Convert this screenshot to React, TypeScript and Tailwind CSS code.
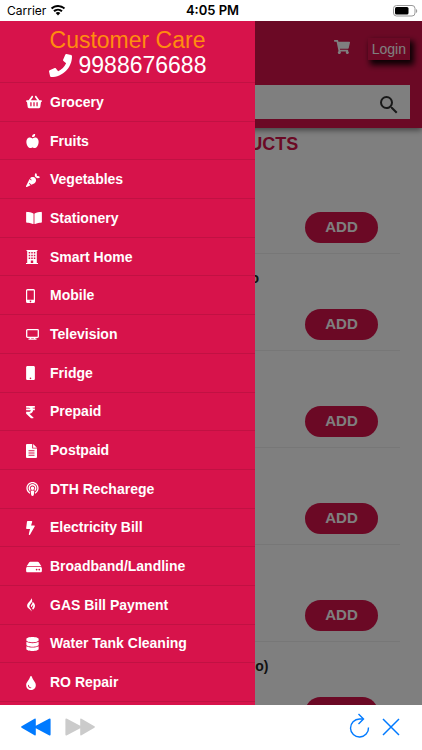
import type { ComponentType, ReactNode } from "react";
import {
  FaAppleAlt,
  FaBolt,
  FaBookOpen,
  FaCarrot,
  FaDatabase,
  FaGripfire,
  FaHdd,
  FaMobile,
  FaPhone,
  FaPodcast,
  FaRupeeSign,
  FaShoppingBasket,
  FaShoppingCart,
  FaTint,
} from "react-icons/fa";
import { MdSearch } from "react-icons/md";

interface IconProps {
  className?: string;
}

interface Category {
  label: string;
  icon: ComponentType<IconProps>;
  size: string;
}

function BuildingIcon({ className }: IconProps) {
  return (
    <svg viewBox="0 0 12 14" className={className} fill="currentColor" fillRule="evenodd">
      <path d="M.5 0h11v1h-.7v12h1.200v1H0v-1h1.200V1H.5ZM2.700 2v1.500h1.500V2ZM5.250 2v1.500h1.500V2ZM7.800 2v1.500h1.500V2ZM2.700 4.700v1.500h1.500V4.700ZM5.250 4.700v1.500h1.500V4.700ZM7.800 4.700v1.500h1.500V4.700ZM2.700 7.400v1.500h1.500V7.400ZM5.250 7.400v1.500h1.500V7.400ZM7.800 7.400v1.500h1.500V7.400ZM4.800 10.500v2.500h2.400v-2.500Z" />
    </svg>
  );
}

function PhoneIcon({ className }: IconProps) {
  return (
    <svg viewBox="0 0 9 14" className={className} fill="currentColor" fillRule="evenodd">
      <path d="M1.500 0h6Q9 0 9 1.500v11Q9 14 7.500 14h-6Q0 14 0 12.500v-11Q0 0 1.500 0ZM1.200 1.400v9.400h6.600V1.400ZM4.500 11.600a.8.8 0 1 0 .01 0Z" />
    </svg>
  );
}

function TvIcon({ className }: IconProps) {
  return (
    <svg viewBox="0 0 13 11" className={className} fill="none" stroke="currentColor" strokeWidth="1.3">
      <rect x=".7" y=".7" width="11.600" height="7.600" rx=".8" />
      <path d="M4.500 8.500v1.500M8.500 8.500v1.500M2.500 10.200h8" />
    </svg>
  );
}

function BillIcon({ className }: IconProps) {
  return (
    <svg viewBox="0 0 11 14" className={className} fill="currentColor" fillRule="evenodd">
      <path d="M1 0h5.200v4.500H11V13q0 1-1 1H1q-1 0-1-1V1q0-1 1-1ZM7.100 0 11 3.700H7.100ZM2.500 6.300v1h6v-1ZM2.500 8.500v1h6v-1ZM2.500 10.700v1h6v-1Z" />
    </svg>
  );
}

const CATEGORIES: Category[] = [
  { label: "Grocery", icon: FaShoppingBasket, size: "h-[14px] w-4" },
  { label: "Fruits", icon: FaAppleAlt, size: "h-[14px] w-[13px]" },
  { label: "Vegetables", icon: FaCarrot, size: "h-[14px] w-[14px]" },
  { label: "Stationery", icon: FaBookOpen, size: "h-[14px] w-4" },
  { label: "Smart Home", icon: BuildingIcon, size: "h-[14px] w-3" },
  { label: "Mobile", icon: PhoneIcon, size: "h-[14px] w-[9px]" },
  { label: "Television", icon: TvIcon, size: "h-[11px] w-[13px]" },
  { label: "Fridge", icon: FaMobile, size: "h-[14px] w-[9px]" },
  { label: "Prepaid", icon: FaRupeeSign, size: "h-[14px] w-[9px]" },
  { label: "Postpaid", icon: BillIcon, size: "h-[14px] w-[11px]" },
  { label: "DTH Recharege", icon: FaPodcast, size: "h-[14px] w-[13px]" },
  { label: "Electricity Bill", icon: FaBolt, size: "h-[14px] w-[9px]" },
  { label: "Broadband/Landline", icon: FaHdd, size: "h-[14px] w-4" },
  { label: "GAS Bill Payment", icon: FaGripfire, size: "h-[14px] w-[11px]" },
  { label: "Water Tank Cleaning", icon: FaDatabase, size: "h-[14px] w-[13px]" },
  { label: "RO Repair", icon: FaTint, size: "h-[14px] w-[10px]" },
];

const PRODUCTS = ["Onion", "Potato Onion Combo", "Tomato", "Carrot", "Spinach", "Baby Carrot (Bamboo)"];

function StatusBar() {
  return (
    <div className="flex h-[21px] shrink-0 items-center justify-between bg-white pr-1 pl-[7px] font-[Inter,sans-serif] text-black">
      <div className="flex flex-1 items-center gap-1 text-xs">
        Carrier
        <svg viewBox="0 0 16 12" className="h-[11px] w-4" fill="currentColor">
          <path d="M8 0C5 0 2.2 1.2.2 3.1l1.5 1.6A9.2 9.2 0 0 1 8 2.2c2.400 0 4.600 1 6.300 2.500l1.500-1.600A11.300 11.300 0 0 0 8 0Z" />
          <path d="M8 4C6 4 4.200 4.800 2.900 6l1.500 1.600a5.300 5.300 0 0 1 7.200 0L13.100 6A7.400 7.400 0 0 0 8 4Z" />
          <path d="M8 7.700c-1 0-1.900.4-2.500 1L8 11.500l2.500-2.800c-.6-.6-1.500-1-2.500-1Z" />
        </svg>
      </div>
      <div className="text-[13px] font-semibold">4:05 PM</div>
      <div className="flex flex-1 justify-end">
        <svg viewBox="0 0 26 12" className="h-3 w-[26px]">
          <rect x="1.500" y=".5" width="21.500" height="10.500" rx="3" fill="none" stroke="#999" />
          <rect x="3" y="2" width="13.500" height="7.500" rx="1.500" />
          <path d="M24.200 4v4c1.300-.6 1.300-3.400 0-4Z" fill="#888" />
        </svg>
      </div>
    </div>
  );
}

function StoreHeader() {
  return (
    <header className="h-[107px] shrink-0 bg-[#d7134b] px-3 shadow-[0_2px_6px_rgba(0,0,0,0.5)]">
      <div className="flex h-16 items-center justify-end gap-[18px] pb-2">
        <button type="button" aria-label="Cart" className="mb-1 text-white">
          <FaShoppingCart className="size-4" />
        </button>
        <a
          href="#login"
          className="flex h-[22px] items-center px-1 text-sm text-white shadow-[3px_4px_6px_1px_rgba(0,0,0,0.9)]"
        >
          Login
        </a>
      </div>
      <form className="flex h-[34px] items-center bg-white pr-[9px]">
        <input
          type="search"
          aria-label="Search products"
          className="h-full min-w-0 flex-1 px-3 text-sm outline-none"
        />
        <button type="button" aria-label="Search" className="pt-[6px] text-[#333]">
          <MdSearch className="size-6" />
        </button>
      </form>
    </header>
  );
}

function ProductRow({ name }: { name: string }) {
  return (
    <li className="flex h-[97px] flex-col justify-between border-b border-[#efefef] pt-4 pb-[10px]">
      <h3 className="pl-[97px] text-sm leading-4 font-bold text-[#222]">{name}</h3>
      <button
        type="button"
        className="mr-[22px] h-[31px] w-[73px] self-end rounded-full bg-[#d7134b] text-[15px] font-bold text-white"
      >
        ADD
      </button>
    </li>
  );
}

function Drawer() {
  return (
    <aside className="absolute inset-y-0 left-0 flex w-[255px] flex-col bg-[#d7134b] pb-[3px] text-white">
      <div className="flex h-[62px] shrink-0 flex-col items-center border-b border-black/10 pt-[7px] text-[23px] leading-[25px]">
        <span className="text-[#ff8c0f]">Customer Care</span>
        <a href="tel:9988676688" className="flex items-center gap-[7px]">
          <FaPhone className="size-[23px]" />
          9988676688
        </a>
      </div>
      <nav className="flex min-h-0 flex-1 flex-col">
        {CATEGORIES.map(({ label, icon: Icon, size }) => (
          <a
            key={label}
            href="#category"
            className="flex flex-1 items-center border-b border-black/10 pl-[26px] text-sm font-bold"
          >
            <span className="flex w-6 pt-px">
              <Icon className={size} />
            </span>
            {label}
          </a>
        ))}
      </nav>
    </aside>
  );
}

function ToolButton({ label, disabled, children }: { label: string; disabled?: boolean; children: ReactNode }) {
  return (
    <button
      type="button"
      aria-label={label}
      disabled={disabled}
      className="text-[#007aff] disabled:text-[#cbcbcb]"
    >
      {children}
    </button>
  );
}

function BrowserBar() {
  return (
    <footer className="flex h-[45px] shrink-0 items-center justify-between bg-white pr-[22px] pb-px pl-[21px]">
      <div className="flex gap-[14px]">
        <ToolButton label="Back">
          <svg viewBox="0 0 30 18" className="h-[18px] w-[30px]" fill="currentColor">
            <path d="M.6 8.300 13.500.7q1.300-.6 1.300.8v6.200L28 .7q1.600-.7 1.600.8v15q0 1.500-1.600.8L14.800 10.300v6.200q0 1.400-1.300.8L.6 9.700q-1-.7 0-1.400Z" />
          </svg>
        </ToolButton>
        <ToolButton label="Forward" disabled>
          <svg viewBox="0 0 30 18" className="h-[18px] w-[30px]" fill="currentColor">
            <path d="M29.400 8.300 16.500.7q-1.300-.6-1.300.8v6.200L2 .7Q.4 0 .4 1.500v15q0 1.500 1.600.8l13.200-7v6.200q0 1.400 1.300.8l12.900-7.600q1-.7 0-1.400Z" />
          </svg>
        </ToolButton>
      </div>
      <div className="flex items-center gap-3">
        <ToolButton label="Reload">
          <svg viewBox="0 0 21 25" className="mb-1 h-[25px] w-[21px]" fill="none" stroke="currentColor" strokeWidth="1.400">
            <path d="M14 6H10.500A9 9 0 1 0 19.500 14.500" />
            <path d="M9.500 1 14.500 6l-5 5" />
          </svg>
        </ToolButton>
        <ToolButton label="Close">
          <svg viewBox="0 0 18 18" className="size-[18px]" fill="none" stroke="currentColor" strokeWidth="1.500">
            <path d="M1 1l16 16M17 1L1 17" />
          </svg>
        </ToolButton>
      </div>
    </footer>
  );
}

export default function App() {
  return (
    <div className="flex h-screen flex-col overflow-hidden bg-white font-['Liberation_Sans',Arial,sans-serif]">
      <StatusBar />
      <div className="relative flex min-h-0 flex-1 flex-col overflow-hidden">
        <StoreHeader />
        <main className="px-[22px]">
          <h2 className="pt-1 text-center text-lg leading-[25px] font-bold text-[#d7134b]">LATEST PRODUCTS</h2>
          <ul>
            {PRODUCTS.map((name) => (
              <ProductRow key={name} name={name} />
            ))}
          </ul>
        </main>
        <div className="absolute inset-0 bg-black/50" />
        <Drawer />
      </div>
      <BrowserBar />
    </div>
  );
}
